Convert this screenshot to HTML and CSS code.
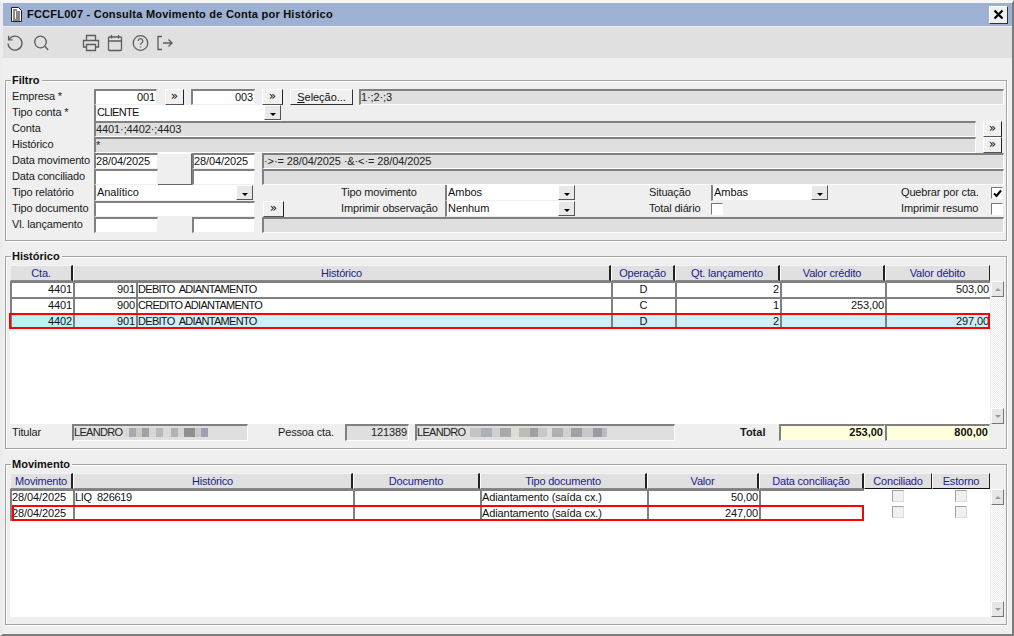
FILE: index.html
```html
<!DOCTYPE html>
<html lang="pt-BR">
<head>
<meta charset="utf-8">
<title>FCCFL007 - Consulta Movimento de Conta por Histórico</title>
<link rel="stylesheet" href="styles.css">
</head>
<body>
<div class="window">
  <header class="titlebar">
    <svg class="doc-icon" width="11" height="15" viewBox="0 0 11 15"><path d="M.5.5h7l3 3v11H.5z" fill="#fff" stroke="#222"/><path d="M2 3h4M2 5h2M5 5h4M2 7h2M5 7h4M2 9h2M5 9h4M2 11h2M5 11h4M2 13h7" stroke="#111" stroke-width="1"/></svg>
    <h1 class="title">FCCFL007 - Consulta Movimento de Conta por Histórico</h1>
    <button class="close" aria-label="Fechar"><svg width="11" height="11" viewBox="0 0 11 11"><path d="M1.5 1.5l8 8M9.5 1.5l-8 8" stroke="#000" stroke-width="2.2"/></svg></button>
  </header>
  <nav class="toolbar">
    <svg class="tool" width="18" height="18" viewBox="0 0 18 18"><path d="M3.2 5.2A7 7 0 1 1 2 9.5" /><path d="M2.6 1.8v4h4"/></svg>
    <svg class="tool tool-search" width="18" height="18" viewBox="0 0 18 18"><circle cx="7.5" cy="8" r="5.8"/><path d="M11.8 12.2l3.4 3.8"/></svg>
    <svg class="tool tool-print" width="18" height="18" viewBox="0 0 18 18"><path d="M4.5 6V1.5h9V6M4.5 13H1.5V6.5h15V13h-3"/><path d="M4.5 10.5h9v6h-9z"/></svg>
    <svg class="tool tool-next" width="18" height="18" viewBox="0 0 18 18"><rect x="1.5" y="3" width="13" height="13.5" rx="1"/><path d="M1.5 7h13M4.5 1v3.5M11.5 1v3.5"/></svg>
    <svg class="tool tool-next" width="18" height="18" viewBox="0 0 18 18"><circle cx="8.5" cy="9" r="7.3"/><path d="M6.2 7a2.3 2.3 0 1 1 3.4 2c-.8.5-1.1.9-1.1 1.8M8.5 12.4v1.2"/></svg>
    <svg class="tool tool-next" width="18" height="18" viewBox="0 0 18 18"><path d="M5 2.5H1v13h4M6 9h9M11.5 5.5L15 9l-3.500 3.500"/></svg>
  </nav>

  <main class="content">
    <section class="group filter">
      <h2 class="legend">Filtro</h2>
      <div class="row">
        <label class="lab">Empresa *</label>
        <div class="field num w63">001</div>
        <button class="more ml8">»</button>
        <div class="field num w64 ml7">003</div>
        <button class="more wide ml7">»</button>
        <button class="action ml7"><u>S</u>eleção...</button>
        <div class="field ro w645 ml6">1·;2·;3</div>
      </div>
      <div class="row">
        <label class="lab">Tipo conta *</label>
        <div class="combo w187"><span class="caps">CLIENTE</span><i class="drop"></i></div>
      </div>
      <div class="row">
        <label class="lab">Conta</label>
        <div class="field ro w882">4401·;4402·;4403</div>
        <button class="more ml7">»</button>
      </div>
      <div class="row">
        <label class="lab">Histórico</label>
        <div class="field ro w882">*</div>
        <button class="more ml7">»</button>
      </div>
      <div class="date-rows">
        <label class="lab">Data movimento</label>
        <div class="field">28/04/2025</div>
        <div class="date-gap"></div>
        <div class="field">28/04/2025</div>
        <div class="field ro date-desc">·&gt;·= 28/04/2025 ·&amp;·&lt;·= 28/04/2025</div>
        <label class="lab">Data conciliado</label>
        <div class="field"></div>
        <div class="field"></div>
        <div class="field ro date-desc"></div>
      </div>
      <div class="option-rows">
        <label class="lab">Tipo relatório</label>
        <div class="combo w159"><span>Analítico</span><i class="drop"></i></div>
        <span></span>
        <label class="lab">Tipo movimento</label>
        <div class="combo"><span>Ambos</span><i class="drop"></i></div>
        <span></span>
        <label class="lab">Situação</label>
        <div class="combo"><span>Ambas</span><i class="drop"></i></div>
        <span></span>
        <label class="lab">Quebrar por cta.</label>
        <div class="check"><svg width="9" height="9" viewBox="0 0 9 9"><path d="M1 4.500l2.500 2.500L8 1.500" fill="none" stroke="#000" stroke-width="2"/></svg></div>

        <label class="lab">Tipo documento</label>
        <div class="field w161"></div>
        <button class="more wide">»</button>
        <label class="lab">Imprimir observação</label>
        <div class="combo"><span>Nenhum</span><i class="drop"></i></div>
        <span></span>
        <label class="lab">Total diário</label>
        <div class="check"></div>
        <span></span>
        <label class="lab">Imprimir resumo</label>
        <div class="check"></div>
      </div>
      <div class="date-rows single">
        <label class="lab">Vl. lançamento</label>
        <div class="field"></div>
        <span></span>
        <div class="field"></div>
        <div class="field ro date-desc"></div>
      </div>
    </section>

    <section class="group history">
      <h2 class="legend">Histórico</h2>
      <div class="list-wrap">
        <div class="list h159">
          <table class="grid">
            <colgroup><col class="c63"><col class="c63"><col class="c475"><col class="c64"><col class="c105"><col class="c105"><col class="c105"></colgroup>
            <thead><tr><th>Cta.</th><th colspan="2">Histórico</th><th>Operação</th><th>Qt. lançamento</th><th>Valor crédito</th><th>Valor débito</th></tr></thead>
            <tbody>
              <tr><td class="r">4401</td><td class="r">901</td><td class="caps">DEBITO  ADIANTAMENTO</td><td class="c">D</td><td class="r">2</td><td class="r"></td><td class="r">503,00</td></tr>
              <tr><td class="r">4401</td><td class="r">900</td><td class="caps">CREDITO ADIANTAMENTO</td><td class="c">C</td><td class="r">1</td><td class="r">253,00</td><td class="r"></td></tr>
              <tr class="selected"><td class="r">4402</td><td class="r">901</td><td class="caps">DEBITO  ADIANTAMENTO</td><td class="c">D</td><td class="r">2</td><td class="r"></td><td class="r">297,00</td></tr>
            </tbody>
          </table>
          <div class="mark mark-history"></div>
        </div>
        <div class="scroll"><i class="up"></i><i class="down"></i></div>
      </div>
      <div class="summary">
        <label class="lab s-titular">Titular</label>
        <div class="field ro s-name"><span class="caps">LEANDRO</span><span class="blur blur-a"></span></div>
        <label class="lab s-pessoa">Pessoa cta.</label>
        <div class="field ro num s-code">121389</div>
        <div class="field ro s-full"><span class="caps">LEANDRO</span><span class="blur blur-b"></span></div>
        <label class="lab s-total">Total</label>
        <div class="field num total">253,00</div>
        <div class="field num total">800,00</div>
      </div>
    </section>

    <section class="group movement">
      <h2 class="legend">Movimento</h2>
      <div class="list-wrap">
        <div class="list h144">
          <table class="grid">
            <colgroup><col class="c63"><col class="c280"><col class="c127"><col class="c167"><col class="c112"><col class="c105"><col class="c68"><col class="c58"></colgroup>
            <thead><tr><th>Movimento</th><th>Histórico</th><th>Documento</th><th>Tipo documento</th><th>Valor</th><th>Data conciliação</th><th class="plain">Conciliado</th><th class="plain">Estorno</th></tr></thead>
            <tbody>
              <tr><td>28/04/2025</td><td class="tight">LIQ  826619</td><td></td><td>Adiantamento (saída cx.)</td><td class="r">50,00</td><td></td><td class="box"><div class="check off"></div></td><td class="box"><div class="check off"></div></td></tr>
              <tr><td>28/04/2025</td><td></td><td></td><td>Adiantamento (saída cx.)</td><td class="r">247,00</td><td></td><td class="box"><div class="check off"></div></td><td class="box"><div class="check off"></div></td></tr>
            </tbody>
          </table>
          <div class="mark mark-movement"></div>
        </div>
        <div class="scroll scroll-m"><i class="up"></i><i class="down"></i></div>
      </div>
    </section>
  </main>
</div>
</body>
</html>
```
FILE: styles.css
```css
* { box-sizing: border-box; }
html, body { margin: 0; padding: 0; overflow: hidden; }
body { width: 1014px; height: 636px; background: #efefef; font: 11px/15px "Liberation Sans", Arial, sans-serif; color: #111; }

.window { width: 1014px; height: 636px; display: flex; flex-direction: column; background: #efefef; border-top: 3px solid #f6f6f6; border-left: 3px solid #ececec; border-right: 2px solid #7c7c7c; border-bottom: 2px solid #7c7c7c; }

.titlebar { height: 23px; flex: none; display: flex; align-items: center; background: #9fb1d3; padding-left: 8px; }
.title { margin: 0 0 0 5px; font-size: 11px; font-weight: bold; letter-spacing: .23px; color: #0b0b0b; flex: 1; white-space: nowrap; }
.close { width: 19px; height: 18px; padding: 0; margin-right: 4px; display: flex; align-items: center; justify-content: center; background: #f0f0f0; border: 1px solid #fff; border-right-color: #333; border-bottom-color: #333; }

.toolbar { height: 31px; flex: none; margin-top: 1px; background: #e0e0e0; display: flex; align-items: center; padding-left: 3px; }
.tool { fill: none; stroke: #5c5c5c; stroke-width: 1.3; flex: none; }
.tool-search { margin-left: 9px; }
.tool-print { margin-left: 31px; }
.tool-next { margin-left: 7px; }

.content { flex: 1; padding: 22px 0 0 2px; display: flex; flex-direction: column; gap: 15px; width: 1005px; }

.group { position: relative; border: 1px solid #a3a3a3; box-shadow: inset 1px 1px 0 #fff, 1px 1px 0 #fff; padding: 8px 0 0 6px; flex: none; width: 1002px; }
.legend { position: absolute; top: -8px; left: 5px; margin: 0; padding: 0 2px 0 1px; background: #efefef; font-size: 11px; font-weight: bold; line-height: 15px; color: #111; }
.filter { height: 161px; }
.history { height: 193px; padding-left: 4px; }
.movement { height: 161px; padding-left: 4px; }

.row { display: flex; height: 16px; }
.lab { width: 82px; flex: none; white-space: nowrap; line-height: 14px; letter-spacing: -.15px; color: #1a1a1a; }

.field { height: 16px; line-height: 12px; padding: 0 1px 0 0; background: #fff; border-top: 2px solid #808080; border-left: 2px solid #808080; border-right: 1px solid #efefef; border-bottom: 1px solid #efefef; white-space: pre; overflow: hidden; flex: none; letter-spacing: -.1px; }
.field.num { text-align: right; }
.field.ro { background: #dfdfdf; border-right-color: #fff; border-bottom-color: #fff; color: #222; }
.w63 { width: 63px; }
.w64 { width: 64px; }
.w161 { width: 161px; }
.w645 { width: 645px; }
.w882 { width: 882px; }
.ml6 { margin-left: 6px; }
.ml7 { margin-left: 7px; }
.ml8 { margin-left: 8px; }
.caps { letter-spacing: -.7px; }
.tight { letter-spacing: -.35px !important; }

.more { width: 19px; height: 16px; flex: none; padding: 0 0 2px; font: 12px/12px "DejaVu Sans", sans-serif; color: #111; background: #f0f0f0; border: 1px solid #fff; border-right-color: #222; border-bottom-color: #555; }
.more.wide { width: 21px; }
.action { width: 63px; height: 16px; flex: none; padding: 0; font: 11px/13px "Liberation Sans", Arial, sans-serif; letter-spacing: -.05px; color: #111; background: #f0f0f0; border: 1px solid #fff; border-right-color: #333; border-bottom-color: #333; }

.combo { height: 16px; display: flex; justify-content: space-between; background: #fff; border-left: 2px solid #808080; padding-left: 1px; line-height: 15px; letter-spacing: -.05px; }
.w187 { width: 187px; flex: none; }
.w159 { width: 159px; }
.drop { width: 17px; height: 15px; background: #e8e8e8; border: 1px solid #fff; border-right-color: #555; border-bottom-color: #555; display: flex; align-items: center; justify-content: center; padding-top: 3px; }
.drop::after { content: ""; border: 3px solid transparent; border-top-color: #000; border-bottom: 0; }

.date-rows { display: grid; grid-template-columns: 82px 64px 34px 63px 1fr; grid-auto-rows: 16px; width: 992px; }
.date-rows .date-desc { margin-left: 7px; width: 742px; }
.date-gap { grid-row: span 2; background: #efefef; border-top: 1px solid #fff; border-right: 1px solid #666; border-bottom: 1px solid #666; }

.option-rows { display: grid; grid-template-columns: 82px 169px 78px 104px 130px 74px 62px 117px 73px 90px 12px; grid-auto-rows: 16px; }
.option-rows .combo { border-bottom: 1px solid #efefef; }
.check { width: 12px; height: 12px; margin-top: 2px; background: #fff; border: 1px solid #fff; border-top-color: #777; border-left-color: #777; display: flex; align-items: center; justify-content: center; }
.check.off { background: #f0f0f0; border-color: #dcdcdc; border-top-color: #a0a0a0; border-left-color: #a0a0a0; margin: 1px auto 0; }

.list-wrap { display: flex; }
.list { position: relative; width: 980px; background: #fff; flex: none; }
.h159 { height: 159px; }
.h144 { height: 144px; }
.grid { border-collapse: separate; border-spacing: 0; table-layout: fixed; width: 980px; }
.grid th { height: 16px; padding: 1px 0 0; vertical-align: top; font-weight: normal; color: #1c1c8c; background: #e0e0e0; border-top: 1px solid #f4f4f4; border-left: 1px solid #fff; border-right: 2px solid #222; border-bottom: 1px solid #888; line-height: 13px; letter-spacing: -.2px; overflow: hidden; }
.grid th:first-child { border-left: 1px solid #efefef; }
.grid th:last-child { border-right-width: 1px; }
.grid th.plain { border-bottom: 1px solid #111; border-right-width: 1px; }
.grid td { height: 16px; padding: 0 1px 0 0; vertical-align: top; border-top: 2px solid #808080; border-left: 2px solid #808080; line-height: 12px; white-space: pre; overflow: hidden; letter-spacing: -.1px; color: #111; }
.grid td.caps { letter-spacing: -.7px; }
.grid td.r { text-align: right; }
.grid td.c { text-align: center; }
.grid td.box { border: 0; padding: 0; }
.grid .selected td { background: #cfeefc; }
.grid .selected td:first-child { background: #b9f4f5; }
.c63 { width: 63px; }
.c64 { width: 64px; }
.c68 { width: 68px; }
.c58 { width: 58px; }
.c105 { width: 105px; }
.c112 { width: 112px; }
.c127 { width: 127px; }
.c167 { width: 167px; }
.c280 { width: 280px; }
.c475 { width: 475px; }

.mark { position: absolute; border: 2px solid #f00; pointer-events: none; }
.mark-history { left: -1px; top: 48px; width: 981px; height: 16px; }
.mark-movement { left: 2px; top: 32px; width: 852px; height: 16px; }

.scroll { width: 13px; height: 143px; margin: 16px 0 0 1px; display: flex; flex-direction: column; justify-content: space-between; flex: none; background-color: #fff; background-image: conic-gradient(#ececec 25%, #fff 0 50%, #ececec 0 75%, #fff 0); background-size: 2px 2px; }
.scroll-m { height: 128px; }
.up, .down { display: flex; align-items: center; justify-content: center; width: 13px; height: 16px; background: #e6e6e6; border: 1px solid #fff; border-right-color: #777; border-bottom-color: #777; }
.up::after { content: ""; border: 3px solid transparent; border-bottom-color: #999; border-top: 0; }
.down::after { content: ""; border: 3px solid transparent; border-top-color: #999; border-bottom: 0; }

.summary { display: flex; height: 17px; }
.summary .lab { width: auto; padding-top: 1px; }
.summary .field { height: 17px; line-height: 13px; }
.s-titular { width: 62px !important; padding-left: 2px; }
.s-name { width: 176px; }
.s-pessoa { margin-left: 30px; width: 67px !important; }
.s-code { width: 64px; }
.s-full { width: 260px; margin-left: 6px; }
.s-total { margin-left: 65px; width: 39px !important; font-weight: bold; letter-spacing: 0 !important; }
.total { width: 106px; background: #ffffdd; font-weight: bold; letter-spacing: 0; }
.total + .total { width: 105px; }

.blur { display: inline-block; height: 9px; vertical-align: -1px; background-size: 100% 100%; filter: blur(.4px); }
.blur-a { width: 84px; margin-left: 2px; background-image: linear-gradient(90deg, #d8d8d8 0 6%, #a9a9a9 0 14%, #cfc9c2 0 22%, #a0a0a0 0 30%, #d6d6d6 0 38%, #bcb8ae 0 46%, #d9d9d9 0 56%, #b2b2b2 0 64%, #d4d4d4 0 72%, #8f8f8f 0 84%, #c8c8c8 0 92%, #9ea0ad 0); }
.blur-b { width: 137px; margin-left: 5px; background-image: linear-gradient(90deg, #c4c4c4 0 8%, #aeb0b8 0 16%, #cfcfcf 0 22%, #a9a9a9 0 30%, #dcdcdc 0 36%, #c0bcb4 0 44%, #9f9f9f 0 50%, #c8c8c8 0 56%, #dcdcdc 0 60%, #b0b0b0 0 68%, #d0d0d0 0 74%, #a0a0a8 0 82%, #c8c8c8 0 90%, #9c98a4 0 96%, #bcbcbc 0); }
```
